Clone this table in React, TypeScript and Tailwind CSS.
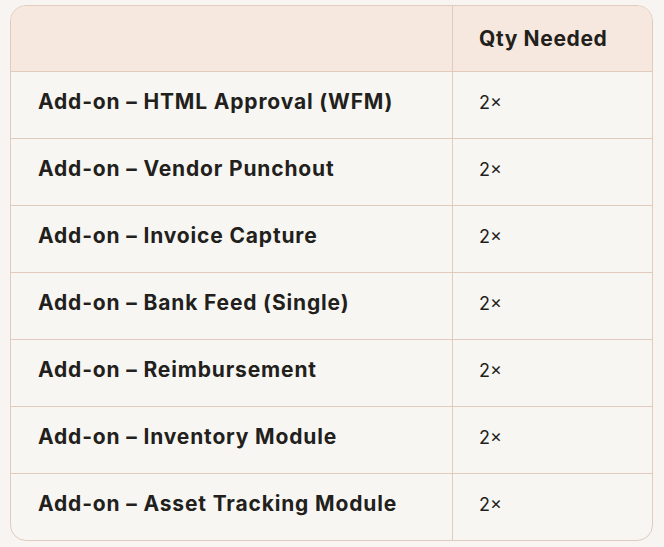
const rows = [
  'Add-on – HTML Approval (WFM)',
  'Add-on – Vendor Punchout',
  'Add-on – Invoice Capture',
  'Add-on – Bank Feed (Single)',
  'Add-on – Reimbursement',
  'Add-on – Inventory Module',
  'Add-on – Asset Tracking Module',
];

export default function App() {
  return (
    <div className="min-h-screen w-full bg-[#f7f4f1] px-[10px] pt-[5px] text-[#221f1c]" style={{ fontFamily: 'Inter, "Noto Sans", sans-serif' }}>
      <div className="w-[643px] overflow-hidden rounded-[16px] border border-[#e0cbbd] bg-[#f8f6f3]">
        <div className="flex h-[65px] bg-[#f6e8de]">
          <div className="w-[442px] border-r border-[#e0cbbd]" />
          <div className="flex flex-1 items-center pl-[26px] text-[21px] font-bold tracking-[0.03em]">Qty Needed</div>
        </div>
        {rows.map((r) => (
          <div key={r} className="flex h-[67px] border-t border-[#e0cbbd]">
            <div className="flex w-[442px] items-center border-r border-[#e0cbbd] pb-[6px] pl-[27px] text-[21px] font-bold tracking-[0.04em]">{r}</div>
            <div className="flex flex-1 items-center pb-[5px] pl-[26px] text-[18px]">2×</div>
          </div>
        ))}
      </div>
    </div>
  );
}
